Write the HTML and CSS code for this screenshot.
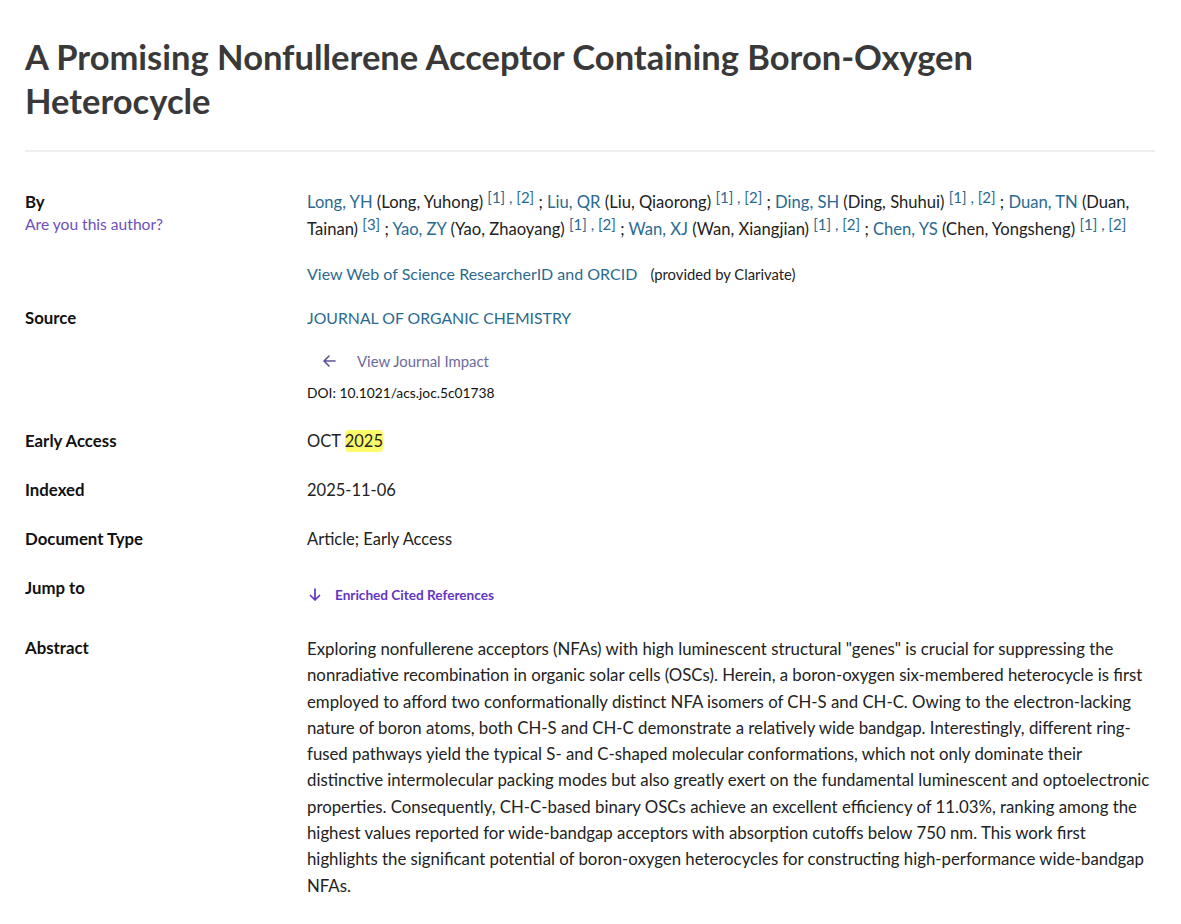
FILE: index.html
```html
<!DOCTYPE html>
<html lang="en">
<head>
<meta charset="utf-8">
<title>A Promising Nonfullerene Acceptor Containing Boron-Oxygen Heterocycle</title>
<link rel="stylesheet" href="styles.css">
</head>
<body>
<main class="page">
  <h1 class="title">A Promising Nonfullerene Acceptor Containing Boron-Oxygen Heterocycle</h1>
  <hr class="divider">

  <div class="row row-by">
    <div class="label">
      <div>By</div>
      <a class="claim" href="#">Are you this author?</a>
    </div>
    <div class="value">
      <p class="authors"><span class="author"><a class="au" href="#">Long, YH</a> <span class="fn">(Long, Yuhong)</span> <sup class="aff">[1] , [2]</sup></span> <span class="sep">;</span> <span class="author"><a class="au" href="#">Liu, QR</a> <span class="fn">(Liu, Qiaorong)</span> <sup class="aff">[1] , [2]</sup></span> <span class="sep">;</span> <span class="author"><a class="au" href="#">Ding, SH</a> <span class="fn">(Ding, Shuhui)</span> <sup class="aff">[1] , [2]</sup></span> <span class="sep">;</span> <span class="author"><a class="au" href="#">Duan, TN</a> <span class="fn">(Duan,</span> <span class="fn">Tainan)</span> <sup class="aff">[3]</sup></span> <span class="sep">;</span> <span class="author"><a class="au" href="#">Yao, ZY</a> <span class="fn">(Yao, Zhaoyang)</span> <sup class="aff">[1] , [2]</sup></span> <span class="sep">;</span> <span class="author"><a class="au" href="#">Wan, XJ</a> <span class="fn">(Wan, Xiangjian)</span> <sup class="aff">[1] , [2]</sup></span> <span class="sep">;</span> <span class="author"><a class="au" href="#">Chen, YS</a> <span class="fn">(Chen, Yongsheng)</span> <sup class="aff">[1] , [2]</sup></span></p>
      <p class="orcid"><a class="au" href="#">View Web of Science ResearcherID and ORCID</a><span class="provided">(provided by Clarivate)</span></p>
    </div>
  </div>

  <div class="row row-source">
    <div class="label">Source</div>
    <div class="value">
      <a class="au journal" href="#">JOURNAL OF ORGANIC CHEMISTRY</a>
      <a class="impact" href="#">
        <svg class="impact-icon" width="16" height="16" viewBox="0 0 16 16" aria-hidden="true"><path d="M14 8H3M8 3L3 8l5 5" fill="none" stroke="currentColor" stroke-width="1.6" stroke-linecap="round" stroke-linejoin="round"/></svg>
        <span>View Journal Impact</span>
      </a>
      <div class="doi">DOI: 10.1021/acs.joc.5c01738</div>
    </div>
  </div>

  <div class="row">
    <div class="label">Early Access</div>
    <div class="value">OCT <mark class="hl">2025</mark></div>
  </div>

  <div class="row">
    <div class="label">Indexed</div>
    <div class="value">2025-11-06</div>
  </div>

  <div class="row">
    <div class="label">Document Type</div>
    <div class="value">Article; Early Access</div>
  </div>

  <div class="row row-jump">
    <div class="label">Jump to</div>
    <div class="value">
      <a class="jump" href="#">
        <svg class="jump-icon" width="16" height="16" viewBox="0 0 16 16" aria-hidden="true"><path d="M8 2v11M3.5 8.5L8 13l4.5-4.5" fill="none" stroke="currentColor" stroke-width="1.7" stroke-linecap="round" stroke-linejoin="round"/></svg>
        <span>Enriched Cited References</span>
      </a>
    </div>
  </div>

  <div class="row row-abstract">
    <div class="label">Abstract</div>
    <div class="value abstract">Exploring nonfullerene acceptors (NFAs) with high luminescent structural "genes" is crucial for suppressing the nonradiative recombination in organic solar cells (OSCs). Herein, a boron-oxygen six-membered heterocycle is first employed to afford two conformationally distinct NFA isomers of CH-S and CH-C. Owing to the electron-lacking nature of boron atoms, both CH-S and CH-C demonstrate a relatively wide bandgap. Interestingly, different ring-fused pathways yield the typical S- and C-shaped molecular conformations, which not only dominate their distinctive intermolecular packing modes but also greatly exert on the fundamental luminescent and optoelectronic properties. Consequently, CH-C-based binary OSCs achieve an excellent efficiency of 11.03%, ranking among the highest values reported for wide-bandgap acceptors with absorption cutoffs below 750 nm. This work first highlights the significant potential of boron-oxygen heterocycles for constructing high-performance wide-bandgap NFAs.</div>
  </div>
</main>
</body>
</html>
```

FILE: styles.css
```css
html, body {
  margin: 0;
  padding: 0;
  background: #ffffff;
}

body {
  font-family: Lato, "Open Sans", "Liberation Sans", sans-serif;
  color: #222222;
  font-size: 16.5px;
}

.page {
  padding: 35px 26px 0 25px;
}

.title {
  margin: 0;
  font-size: 34.5px;
  line-height: 44px;
  font-weight: 700;
  color: #393939;
}

.divider {
  border: 0;
  height: 2px;
  background: #eeeeee;
  margin: 27px 0 38px 0;
}

.row {
  display: grid;
  grid-template-columns: 282px 1fr;
  margin-bottom: 25px;
  line-height: 24px;
}

.label {
  font-size: 16.8px;
  font-weight: 700;
  color: #111111;
}

.claim {
  display: block;
  font-weight: 400;
  font-size: 15.6px;
  line-height: 20px;
  color: #6c4fbd;
  text-decoration: none;
}

.value {
  color: #222222;
}

.authors {
  margin: -1px 0 0 0;
  line-height: 27px;
  font-size: 16.6px;
  color: #222222;
}

.au {
  color: #2b6a8f;
  text-decoration: none;
}

.fn {
  color: #222222;
}

.sep {
  color: #222222;
}

.aff {
  color: #2b6a8f;
  font-size: 15px;
  line-height: 15px;
  vertical-align: 5px;
}

.orcid {
  margin: 19px 0 0 0;
  font-size: 16px;
}

.provided {
  margin-left: 13px;
  font-size: 14.8px;
  color: #222222;
}

.row-by {
  margin-bottom: 20px;
}

.journal {
  display: block;
  font-size: 15.8px;
}

.impact {
  display: flex;
  align-items: center;
  gap: 20px;
  margin: 17px 0 0 14px;
  font-size: 14.9px;
  line-height: 28px;
  color: #6d6a9c;
  text-decoration: none;
}

.impact-icon {
  color: #5c4f99;
}

.doi {
  margin-top: 7px;
  font-size: 13.8px;
  line-height: 22px;
  color: #111111;
}

.hl {
  background: #fcfc6a;
  color: #222222;
  border-radius: 4px;
  padding: 1px 0;
}

.row-jump {
  margin-bottom: 22px;
}

.jump {
  display: inline-flex;
  align-items: center;
  gap: 12px;
  padding: 7px 0 7px 0;
  font-size: 13.6px;
  font-weight: 700;
  color: #6336c2;
  text-decoration: none;
}

.jump-icon {
  color: #6336c2;
}

.abstract {
  font-size: 16.8px;
  line-height: 26.3px;
  color: #222222;
}
```
